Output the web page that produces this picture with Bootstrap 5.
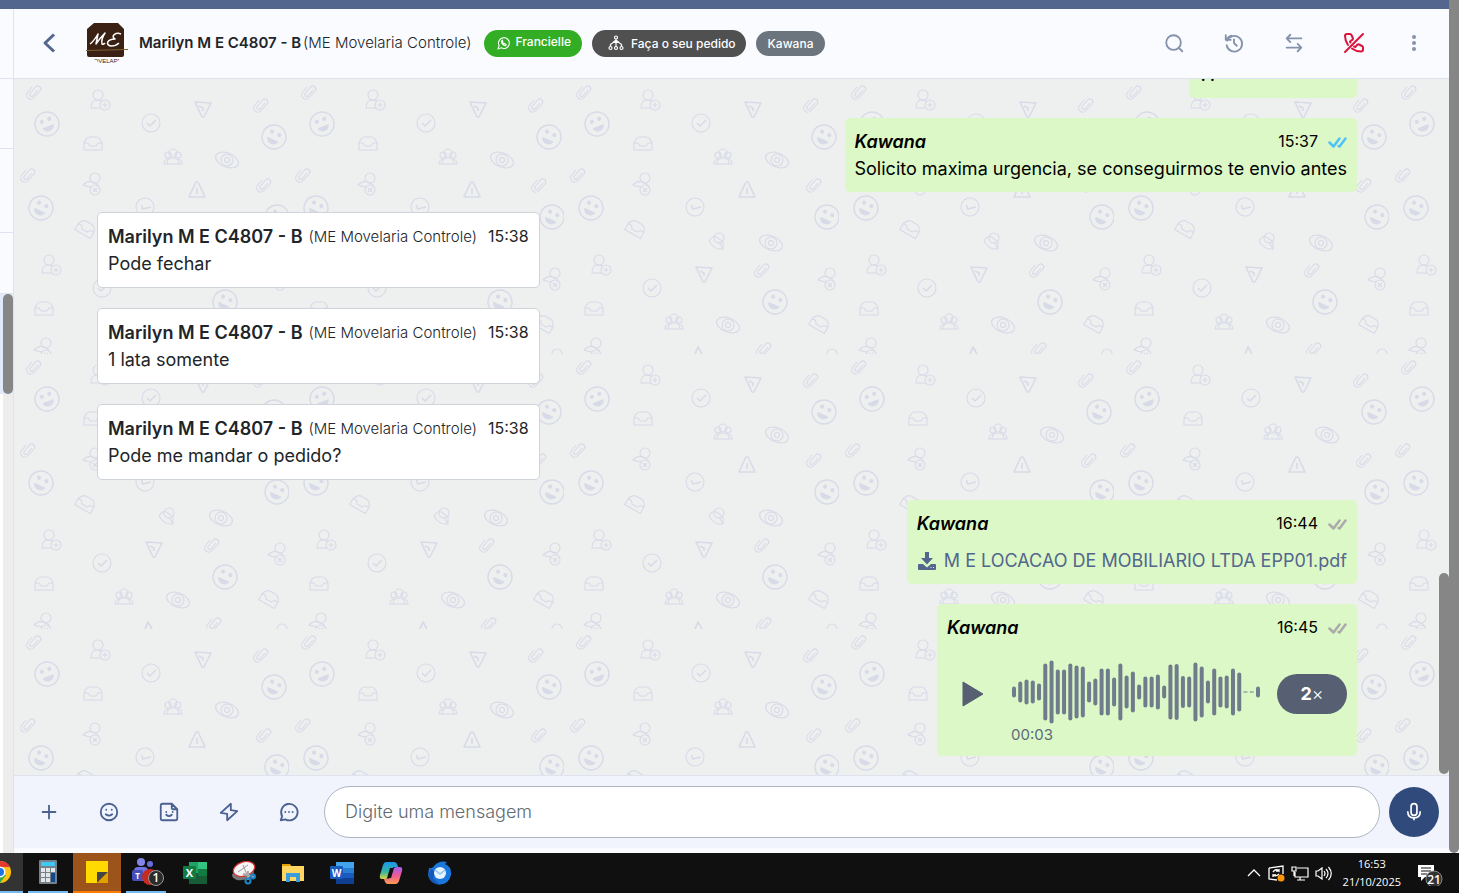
<!DOCTYPE html>
<html lang="pt-BR">
<head>
<meta charset="utf-8">
<meta name="viewport" content="width=device-width, initial-scale=1">
<title>Atendimento</title>
<link href="https://cdn.jsdelivr.net/npm/bootstrap@5.3.0/dist/css/bootstrap.min.css" rel="stylesheet">
<style>
body{font-family:Inter,"Liberation Sans",sans-serif;background:#fafbff;color:#212529}
svg{display:block;flex:none}
.ic{fill:none;stroke:currentColor;stroke-width:2;stroke-linecap:round;stroke-linejoin:round}
.iconbtn{width:60px;height:60px;padding:0;border:0;display:flex;align-items:center;justify-content:center;color:#8592ab;flex:none}
.topstrip{height:9px;background:#53668d}
.pagebar{width:10px;background:#868686;border-radius:0 0 5px 5px}
.sliver{width:14px;border-right:1px solid #dfe3ef;background:#ededed}
.sliver .conv{border-bottom:1px solid #dfe3ef;background:#fafbff}
.sliver .sel{height:100px;background:#dfebf8;padding-left:3px}
.sliver .thumb{height:100px;background:#868686;border-radius:5px}
.sliver .rest{width:3px;background:#fff}
.chathead{height:70px;border-bottom:1px solid #dfe3ef;background:#fafbff;padding-left:14px;padding-right:5px}
.headname{font-size:15px;line-height:24px;gap:2px;margin-left:11px}
.org{font-size:15px;font-weight:300}
.semi{font-weight:600}
.pills{margin-left:13px;gap:10px}
.pill{border-radius:14px;color:#fff;font-size:12px;font-weight:500;line-height:17px;border:0}
.pill-green{background:#33ae24;height:27px;padding:0 11px 0 13px;gap:5px}
.pill-green span{padding-bottom:4px}
.pill-dark{background:#505050;height:27px;padding:0 10px 0 16px;gap:7px}
.pill-gray{background:#6c757d;height:25px;padding:0 12px}
.feed{background-color:#eeefef;gap:20px;padding:0 92px 19px 83px;
background-image:url("data:image/svg+xml,%3Csvg xmlns='http://www.w3.org/2000/svg' xmlns:xlink='http://www.w3.org/1999/xlink' width='275' height='275' viewBox='0 0 275 275'%3E%3Cdefs%3E%3Cpath id='c' d='M5 -2L0 4a2 2 0 0 1-3-2.500L2.500-5a3 3 0 0 1 4.500 4L1 5.500a4 4 0 0 1-6.500-5L-1-5'/%3E%3Cg id='s'%3E%3Ccircle r='12' stroke-width='1.400'/%3E%3Ccircle cx='-4' cy='-4' r='1.500' fill='%23d8dae8'/%3E%3Ccircle cx='4' cy='-4' r='1.500' fill='%23d8dae8'/%3E%3Cpath d='M-5.500 3H5.500Q4 7 0 7T-5.500 3' fill='%23d8dae8'/%3E%3C/g%3E%3Cg id='k'%3E%3Ccircle r='9'/%3E%3Cpath d='M-4 0l3 3 6-6' stroke-width='1.500'/%3E%3C/g%3E%3Cg id='u'%3E%3Ccircle cx='-2' cy='-5' r='5'/%3E%3Cpath d='M1 8H-9Q-9 0-3 0Q1 0 2 2'/%3E%3Ccircle cx='5' cy='5' r='5'/%3E%3Cpath d='M2.500 5h5M5 2.500v5'/%3E%3C/g%3E%3Cg id='x'%3E%3Ccircle cx='3' cy='-6' r='5'/%3E%3Cpath d='M3-1Q-3-5-9 1Q-3 3 0 3M3-1Q8 2 6 3'/%3E%3Ccircle cx='3' cy='6' r='5'/%3E%3Cpath d='M1 4l4 4M5 4l-4 4'/%3E%3C/g%3E%3Cpath id='p' d='M-8-7L8-6L1 8H-1ZM-4-3L0-1V2' stroke-width='1.600'/%3E%3Cpath id='v' d='M-8 7Q-4-2-1-8H1Q4-2 8 7ZM0-2V4' stroke-width='1.600'/%3E%3Cpath id='i' d='M-9 7V0Q-7-6-3-6H3Q7-6 9 0V7ZM-9 0H-5L-3 3H3L5 0H9'/%3E%3Cg id='g'%3E%3Ccircle cy='-4' r='4'/%3E%3Ccircle cx='-5' cy='-2' r='3'/%3E%3Ccircle cx='5' cy='-2' r='3'/%3E%3Cpath d='M-6 7Q-6 1 0 1T6 7ZM-6 7H-9Q-9 3-5 2M6 7H9Q9 3 5 2'/%3E%3C/g%3E%3Cg id='e'%3E%3Cellipse rx='12' ry='7'/%3E%3Ccircle r='6'/%3E%3Ccircle r='2.500'/%3E%3C/g%3E%3C/defs%3E%3Cg fill='none' stroke='%23d8dae8' stroke-width='1.100' stroke-linejoin='round'%3E%3Cuse xlink:href='%23c' x='19' y='13'/%3E%3Cuse xlink:href='%23u' x='86' y='21'/%3E%3Cuse xlink:href='%23p' x='189' y='30'/%3E%3Cuse xlink:href='%23c' x='246' y='26'/%3E%3Cuse xlink:href='%23s' transform='translate(33 45) rotate(-22)'/%3E%3Cuse xlink:href='%23k' x='137' y='44'/%3E%3Cuse xlink:href='%23s' transform='translate(260 58) rotate(25)'/%3E%3Cuse xlink:href='%23i' x='79' y='64'/%3E%3Cuse xlink:href='%23g' x='159' y='78'/%3E%3Cuse xlink:href='%23e' transform='translate(213 81) rotate(22)'/%3E%3Cuse xlink:href='%23c' x='13' y='96'/%3E%3Cuse xlink:href='%23x' x='78' y='105'/%3E%3Cuse xlink:href='%23v' x='183' y='111'/%3E%3Cuse xlink:href='%23c' x='249' y='106'/%3E%3Cuse xlink:href='%23s' transform='translate(27 129) rotate(25)'/%3E%3Cuse xlink:href='%23k' transform='translate(131 128) rotate(30)'/%3E%3Cuse xlink:href='%23s' transform='translate(263 138) rotate(25)'/%3E%3Cuse xlink:href='%23i' transform='translate(72 149) rotate(30)'/%3E%3Cpath d='M145 162Q149 155 154 159L159 163V170H155Q149 169 145 162M155 163l4 7'/%3E%3Ccircle cx='155' cy='159' r='5'/%3E%3Cuse xlink:href='%23e' transform='translate(207 164) rotate(22)'/%3E%3Cuse xlink:href='%23u' x='37' y='186'/%3E%3Cuse xlink:href='%23p' x='140' y='195'/%3E%3Cuse xlink:href='%23c' x='197' y='191'/%3E%3Cuse xlink:href='%23x' x='263' y='200'/%3E%3Cuse xlink:href='%23k' x='88' y='209'/%3E%3Cuse xlink:href='%23s' transform='translate(211 223) rotate(25)'/%3E%3Cuse xlink:href='%23i' x='30' y='229'/%3E%3Cuse xlink:href='%23i' transform='translate(256 244) rotate(30)'/%3E%3Cuse xlink:href='%23g' x='110' y='243'/%3E%3Cuse xlink:href='%23e' transform='translate(164 246) rotate(22)'/%3E%3Ccircle cx='268' cy='275' r='5'/%3E%3Cuse xlink:href='%23x' x='29' y='270'/%3E%3Cpath d='M131 275l3-7 4 7' stroke-width='1.700'/%3E%3Cuse xlink:href='%23c' x='199' y='270'/%3E%3C/g%3E%3C/svg%3E")}
.bubble{border-radius:5px;padding:10px;font-size:18px;line-height:27px;flex:none}
.sent{background:#dcf8c6;color:#000;align-self:flex-end}
.got{background:#fff;border:1px solid #ced4da;align-self:flex-start}
.bubble time{font-size:16px}
.got .org{margin-left:6px;margin-right:11px}
.sent .who{font-style:italic;font-weight:600}
.ticks{margin-left:10px;stroke-width:2.500;fill:none;stroke-linecap:round;stroke-linejoin:round}
.short{width:168px}
.filelink{color:#53668d;margin-top:10px;gap:7px}
.audio{width:420px}
.player{height:105px}
.playbtn{width:64px;border:0;padding:0 0 0 15px;background:none}
.wavewrap{width:250px;padding-top:19px}
.wavewrap .clock{font-size:15px;line-height:22px;color:#5d6b78}
.speed{width:70px;height:40px;border:0;border-radius:20px;background:#575f72;color:#fff;font-size:18px;line-height:27px;margin-left:16px;padding:0}
.speed b{font-weight:700}
.speed span{font-weight:300}
.innerbar{right:0;bottom:1px;width:10px;height:201px;background:#868686;border-radius:5px}
.composer{height:73px;background:#f1f4fd;border-top:1px solid #dfe3ef;padding:0 10px 0 5px}
.composer .iconbtn{color:#4b6190}
.msginput{height:52px;border:1px solid #adb5c4;border-radius:26px;padding:0 20px 1px;font-size:18px;font-weight:300;margin-left:5px;margin-right:9px;background:#fff}
.msginput::placeholder{color:#5f6972}
.mic{width:50px;height:50px;border:0;background:#304b7b;color:#fff}
.underfoot{height:5px}
.taskbar{height:40px;background:#101010;font-family:"Open Sans",sans-serif;color:#fff}
.app{width:40px;height:40px;border:0;padding:0;background:none;display:flex;align-items:center;justify-content:center;flex:none}
.apps{gap:9px}
.app.on{border-bottom:2px solid #76b9ed}
.app.chrome{width:23px;background:#333;justify-content:flex-start;overflow:hidden;margin-right:-4px}
.app.note{width:48px;background:#9d541b;border-bottom:2px solid #ff7b00;margin:0 -4px}
.clockbox{font-size:11px;line-height:18px;text-align:center}
.tray{gap:6px}
</style>
</head>
<body class="vh-100 d-flex flex-column overflow-hidden">
<div class="d-flex flex-grow-1" style="min-height:0">
  <div class="d-flex flex-column flex-grow-1" style="min-width:0">
    <div class="topstrip"></div>
    <div class="d-flex flex-grow-1" style="min-height:0">
      <aside class="sliver d-flex flex-column flex-shrink-0">
        <div class="conv" style="height:70px"></div>
        <div class="conv" style="height:70px"></div>
        <div class="conv" style="height:84px"></div>
        <div class="conv" style="height:61px"></div>
        <div class="sel"><div class="thumb"></div></div>
        <div class="rest flex-grow-1"></div>
      </aside>
      <main class="d-flex flex-column flex-grow-1" style="min-width:0">
        <header class="chathead d-flex align-items-center flex-shrink-0">
          <button class="iconbtn bg-transparent" style="width:42px" aria-label="Voltar"><svg class="ic" width="24" height="24" viewBox="0 0 24 24" style="color:#53668d;stroke-width:3;stroke-linecap:butt"><path d="M17 3.500l-9 8.500 9 8.500"/></svg></button>
          <svg class="ms-3" width="42" height="42" viewBox="0 0 42 42" role="img" aria-label="ME Movelaria"><clipPath id="av"><circle cx="21" cy="21" r="21"/></clipPath><circle cx="21" cy="21" r="21" fill="#fff"/><path d="M8 1h24l6 6v26q0 2-2 2H3q-2 0-2-2V7z" fill="#3b2014"/><path d="M4 22q4-3 8-10l-2 10q4-6 9-11-4 6-3 11 1 1 3-1M35 12c-5-2-11 2-6 5-8 0-10 6-4 7 3 0 6-1 8-3" fill="none" stroke="#fff" stroke-width="1.500" stroke-linejoin="round"/><path d="M0 28.500l42-1" stroke="#80602f" stroke-width="1"/><g clip-path="url(#av)"><text x="20" y="41" text-anchor="middle" font-size="6" font-family="Liberation Sans" fill="#3b2014">MOVELARIA</text></g></svg>
          <div class="headname d-flex text-nowrap"><span class="semi">Marilyn M E C4807 - B</span><span class="org">(ME Movelaria Controle)</span></div>
          <div class="pills d-flex align-items-center text-nowrap">
            <span class="pill pill-green d-flex align-items-center"><svg width="13" height="13" viewBox="0 0 24 24" fill="none" stroke="#fff" stroke-width="2"><path d="M2 22l2-6a10 10 0 1 1 4 4zM8 8c0 4 4 8 8 8l1-2-3-2-1 1q-2-1-3-3l1-1-1-3z"/></svg><span>Francielle</span></span>
            <span class="pill pill-dark d-flex align-items-center"><svg width="16" height="16" viewBox="0 0 16 16" fill="none" stroke="#fff" stroke-width="1.200"><circle cx="8" cy="2.500" r="1.500"/><circle cx="2.500" cy="13" r="1.500"/><circle cx="8" cy="13" r="1.500"/><circle cx="13.500" cy="13" r="1.500"/><path d="M8 4v7.500M2.500 11.500V9.500L5 7.500h6l2.500 2v2M5 7.500L8 5l3 2.500"/></svg><span>Faça o seu pedido</span></span>
            <span class="pill pill-gray d-flex align-items-center">Kawana</span>
          </div>
          <div class="d-flex ms-auto">
            <button class="iconbtn bg-transparent" aria-label="Buscar"><svg class="ic" width="22" height="22" viewBox="0 0 24 24"><circle cx="11.500" cy="11.500" r="8"/><path d="M21 21l-3.500-3.500"/></svg></button>
            <button class="iconbtn bg-transparent" aria-label="Histórico"><svg class="ic" width="22" height="22" viewBox="0 0 24 24"><path d="M12 8v4l3 3M4.500 9.500A8.500 8.500 0 1 1 4 14.500M3 3.500v5h5.500M4 8q2-3 5-4"/></svg></button>
            <button class="iconbtn bg-transparent" aria-label="Transferir"><svg class="ic" width="22" height="22" viewBox="0 0 24 24"><path d="M20 7H4M8 3L4 7l4 4M4 17h16M16 13l4 4-4 4"/></svg></button>
            <button class="iconbtn bg-transparent" aria-label="Encerrar" style="color:#dc143c"><svg class="ic" width="24" height="24" viewBox="0 0 24 24"><path d="M21 3L3 21M6 14Q3 9.500 3 5q0-2 2-2h3q1 0 1.500 1L11 7.500q0 1-1 1.500L8 10.500l.5 1M12 15.500l1.500.5 1.500-2q1-1 2-.5l3 1.500q1 .5 1 1.500v2q0 2-2 2-5 0-9-3"/></svg></button>
            <button class="iconbtn bg-transparent" aria-label="Mais opções"><svg width="22" height="22" viewBox="0 0 22 22" fill="currentColor"><circle cx="11" cy="5" r="2"/><circle cx="11" cy="11" r="2"/><circle cx="11" cy="17" r="2"/></svg></button>
          </div>
        </header>
        <section class="position-relative flex-grow-1 d-flex flex-column overflow-hidden" style="min-height:0">
          <div class="feed flex-grow-1 d-flex flex-column justify-content-end overflow-hidden" style="min-height:0">
            <article class="bubble sent short">??</article>
            <article class="bubble sent">
              <div class="d-flex align-items-center"><span class="who">Kawana</span><time class="ms-auto">15:37</time><svg class="ticks" width="19" height="12" viewBox="0 0 19 12" stroke="#4fc3f7"><path d="M1.500 6.500l4 4 6-8M10.500 10l1 .5 6-8"/></svg></div>
              <div>Solicito maxima urgencia, se conseguirmos te envio antes</div>
            </article>
            <article class="bubble got"><div class="d-flex align-items-center"><span class="semi">Marilyn M E C4807 - B</span><span class="org">(ME Movelaria Controle)</span><time>15:38</time></div><div>Pode fechar</div></article>
            <article class="bubble got"><div class="d-flex align-items-center"><span class="semi">Marilyn M E C4807 - B</span><span class="org">(ME Movelaria Controle)</span><time>15:38</time></div><div>1 lata somente</div></article>
            <article class="bubble got"><div class="d-flex align-items-center"><span class="semi">Marilyn M E C4807 - B</span><span class="org">(ME Movelaria Controle)</span><time>15:38</time></div><div>Pode me mandar o pedido?</div></article>
            <article class="bubble sent">
              <div class="d-flex align-items-center"><span class="who">Kawana</span><time class="ms-auto">16:44</time><svg class="ticks" width="19" height="12" viewBox="0 0 19 12" stroke="#aaa"><path d="M1.500 6.500l4 4 6-8M10.500 10l1 .5 6-8"/></svg></div>
              <a href="#" class="filelink d-flex align-items-center text-decoration-none"><svg width="20" height="20" viewBox="0 0 20 20" fill="currentColor"><path d="M8 1h4v6h4l-6 6.500L4 7h4zM2 13h4l4 3.500 4-3.500h4q1 0 1 1v4q0 1-1 1H2q-1 0-1-1v-4q0-1 1-1z"/><path d="M13.500 16.500h1M16 16.500h1" stroke="#dcf8c6"/></svg><span>M E LOCACAO DE MOBILIARIO LTDA EPP01.pdf</span></a>
            </article>
            <article class="bubble sent audio">
              <div class="d-flex align-items-center"><span class="who">Kawana</span><time class="ms-auto">16:45</time><svg class="ticks" width="19" height="12" viewBox="0 0 19 12" stroke="#aaa"><path d="M1.500 6.500l4 4 6-8M10.500 10l1 .5 6-8"/></svg></div>
              <div class="player d-flex">
                <button class="playbtn" aria-label="Reproduzir"><svg width="22" height="26" viewBox="0 0 22 26"><path d="M1 1l20 12L1 25z" fill="#575f72" stroke="#575f72" stroke-linejoin="round"/></svg></button>
                <div class="wavewrap"><svg id="wave" width="250" height="64" viewBox="0 0 250 64" stroke="#707c8b" stroke-width="4" stroke-linecap="round"></svg><div class="clock">00:03</div></div>
                <button class="speed align-self-center"><b>2</b><span>×</span></button>
              </div>
            </article>
          </div>
          <div class="innerbar position-absolute"></div>
        </section>
        <footer class="composer d-flex align-items-center flex-shrink-0">
          <button class="iconbtn bg-transparent" aria-label="Anexar"><svg class="ic" width="22" height="22" viewBox="0 0 24 24"><path d="M12 5v14M5 12h14"/></svg></button>
          <button class="iconbtn bg-transparent" aria-label="Emojis"><svg class="ic" width="22" height="22" viewBox="0 0 24 24"><circle cx="12" cy="12" r="9"/><path d="M9 9.500h0M15 9.500h0M8.500 14.500q3.500 3 7 0"/></svg></button>
          <button class="iconbtn bg-transparent" aria-label="Figurinhas"><svg class="ic" width="22" height="22" viewBox="0 0 24 24"><path d="M5 3h10l6 6v10q0 2-2 2H5q-2 0-2-2V5q0-2 2-2M15 3v5q0 1 1 1h5M9 12h0M16 12h0M9 15q3 3 6 0"/></svg></button>
          <button class="iconbtn bg-transparent" aria-label="Respostas rápidas"><svg class="ic" width="22" height="22" viewBox="0 0 24 24"><path d="M14 3v7l7 1-11 10v-7l-7-1z"/></svg></button>
          <button class="iconbtn bg-transparent" aria-label="Comentário"><svg class="ic" width="22" height="22" viewBox="0 0 24 24"><path d="M3 21l1.500-4.500A9 9 0 1 1 8 20zM8 12h0M12 12h0M16 12h0"/></svg></button>
          <input class="msginput flex-grow-1" type="text" placeholder="Digite uma mensagem" aria-label="Digite uma mensagem">
          <button class="mic rounded-circle d-flex align-items-center justify-content-center flex-shrink-0 p-0" aria-label="Gravar áudio"><svg class="ic" width="20" height="20" viewBox="0 0 24 24"><rect x="8.500" y="2" width="7" height="14" rx="3.500"/><path d="M4.500 11q0 8 7.500 8t7.500-8M12 19v3" stroke-linecap="butt"/></svg></button>
        </footer>
        <div class="underfoot flex-shrink-0"></div>
      </main>
    </div>
  </div>
  <div class="pagebar flex-shrink-0"></div>
</div>
<nav class="taskbar d-flex align-items-center flex-shrink-0">
  <div class="apps d-flex">
    <button class="app on chrome" aria-label="Chrome"><svg width="12" height="24" viewBox="12 0 12 24"><circle cx="12" cy="12" r="11" fill="#fbc116"/><path d="M0 1h12a11 11 0 0 1 10 6H0z" fill="#e33b2e"/><path d="M12 23l6-8-9 0v8z" fill="#2da94f"/><circle cx="12" cy="12" r="5.500" fill="#fff"/><circle cx="12" cy="12" r="4" fill="#1a73e8"/></svg></button>
    <button class="app on" aria-label="Calculadora"><svg width="18" height="24" viewBox="0 0 18 24"><rect width="18" height="24" rx="1" fill="#75818b"/><rect x="2" y="2" width="14" height="4" fill="#40c8f4"/><g fill="#e3e6e9"><path d="M2 8h4v4H2zM7 8h4v4H7zM12 8h4v4h-4zM2 13h4v4H2zM7 13h4v4H7zM2 18h4v4H2zM7 18h4v4H7z"/></g><path d="M12 13h4v9h-4z" fill="#114a8c"/></svg></button>
    <button class="app note" aria-label="Notas"><svg width="22" height="22" viewBox="0 0 22 22"><path d="M0 0h22v11L11 22H0z" fill="#ffd900"/><path d="M11 22V11h11z" fill="#444"/><path d="M22 11v11H11z" fill="#dfa000"/></svg></button>
    <button class="app on" aria-label="Teams"><svg width="36" height="28" viewBox="0 0 36 28"><circle cx="13" cy="4" r="4" fill="#8187e8"/><circle cx="22" cy="6" r="3" fill="#666ddd"/><rect x="6" y="9" width="14" height="14" rx="4" fill="#7075e5"/><rect x="4" y="12" width="11" height="11" rx="2" fill="#464eb8"/><text x="9.500" y="20.500" font-size="8" font-weight="700" text-anchor="middle" fill="#fff">T</text><circle cx="22" cy="19" r="8" fill="#c52b20"/><circle cx="28" cy="20" r="7.500" fill="#2b2b2b" stroke="#999"/><text x="28" y="24" font-size="12" font-weight="600" text-anchor="middle" fill="#fff">1</text></svg></button>
    <button class="app" aria-label="Excel"><svg width="24" height="22" viewBox="0 0 24 22"><path d="M6 0h9v11H6z" fill="#21a366"/><path d="M15 0h9v7h-9z" fill="#33c481"/><path d="M15 7h9v7h-9z" fill="#107c41"/><path d="M6 11h9v11H6zM15 14h9v8h-9z" fill="#185c37"/><rect y="4" width="13" height="13" rx="1" fill="#107c41"/><text x="6.500" y="14.500" font-size="11" font-weight="700" text-anchor="middle" fill="#fff">X</text></svg></button>
    <button class="app" aria-label="Ferramenta de Captura"><svg width="26" height="24" viewBox="0 0 26 24"><ellipse cx="12" cy="13" rx="11" ry="6" transform="rotate(-12 12 13)" fill="#777"/><ellipse cx="13" cy="8" rx="11" ry="7" transform="rotate(-18 13 8)" fill="#f5f5f5" stroke="#d33" stroke-width="1.200"/><path d="M7 11l10-7M12 4l4 10" stroke="#999"/><path d="M12 13l11 3M17 10v9" stroke="#aaa" stroke-width="2"/><g fill="none" stroke="#1c86c7" stroke-width="2"><circle cx="17" cy="20" r="2.500"/><circle cx="22" cy="15.500" r="2"/></g></svg></button>
    <button class="app" aria-label="Explorador de Arquivos"><svg width="22" height="20" viewBox="0 0 22 20"><path d="M0 1h8l2 3H0z" fill="#e8a200"/><path d="M0 3h22v15H0z" fill="#ffd660"/><path d="M4 19v-9h14v9h-4v-5H8v5z" fill="#3b9bdc"/></svg></button>
    <button class="app" aria-label="Word"><svg width="24" height="22" viewBox="0 0 24 22"><path d="M6 0h18v6H6z" fill="#41a5ee"/><path d="M6 6h18v5H6z" fill="#2b7cd3"/><path d="M6 11h18v5H6z" fill="#185abd"/><path d="M6 16h18v6H6z" fill="#103f91"/><rect y="4" width="13" height="13" rx="1" fill="#185abd"/><text x="6.500" y="14.500" font-size="10" font-weight="700" text-anchor="middle" fill="#fff">W</text></svg></button>
    <button class="app" aria-label="Copilot"><svg width="24" height="22" viewBox="0 0 24 22"><defs><linearGradient id="ca" x2="0" y2="1"><stop stop-color="#1995ec"/><stop offset=".6" stop-color="#39b5a0"/><stop offset="1" stop-color="#e5d43a"/></linearGradient><linearGradient id="cb" x2="0" y2="1"><stop stop-color="#a45df0"/><stop offset=".5" stop-color="#ed5a95"/><stop offset="1" stop-color="#ff9b52"/></linearGradient></defs><path d="M7 0h8q3 0 4 5h-3q-3 0-4 4l-2 6q-1 2-4 2H3q-3 0-2-4L4 3q1-3 3-3z" fill="url(#ca)"/><path d="M17 22H9q-3 0-4-5h3q3 0 4-4l2-6q1-2 4-2h3q3 0 2 4l-3 10q-1 3-3 3z" fill="url(#cb)"/><path d="M11 6h4l-3 10H8z" fill="#101010"/></svg></button>
    <button class="app" aria-label="Thunderbird"><svg width="26" height="24" viewBox="0 0 26 24"><path d="M2 7q3 1 5-2 5-6 13-4l-2 2q7 3 6 11-2 9-11 9.500Q3 23 1 14z" fill="#1a77dc"/><path d="M1 14l3-6 4 3-2 6 7 7Q3 23 1 14" fill="#1459b8"/><circle cx="13" cy="12" r="6" fill="#e8f4ff"/><path d="M8 9l5 4 5-4" fill="none" stroke="#8cc3f3" stroke-width="1.500"/></svg></button>
  </div>
  <div class="tray d-flex align-items-center ms-auto">
    <svg width="14" height="18" viewBox="0 0 14 18" fill="none" stroke="#fff" stroke-width="1.300"><path d="M1 12l6-6 6 6"/></svg>
    <svg width="18" height="18" viewBox="0 0 18 18" fill="none" stroke="#fff" stroke-width="1.300"><path d="M2 4l14-2v8M2 4v11l8 1M6 8q3-4 6-1V5M12 10q-3 3-6 1v2M6 11h3M9 7h3"/><circle cx="14" cy="14" r="3.500" fill="#ff950a" stroke="none"/></svg>
    <svg width="18" height="18" viewBox="0 0 18 18" fill="none" stroke="#fff" stroke-width="1.200"><path d="M6 4h11v9H4V8M9 13v3M6 16h8M1 3h4v4H1zM3 7v5"/></svg>
    <svg width="18" height="18" viewBox="0 0 18 18" fill="none" stroke="#fff" stroke-width="1.200"><path d="M1 7v5h2l4 3V4L3 7zM9 7q2 2.500 0 5M11 5q4 4.500 0 9M13.500 3q5.500 6.500 0 13"/></svg>
    <div class="clockbox ms-1">16:53<br>21/10/2025</div>
    <svg class="ms-2 me-3" width="28" height="26" viewBox="0 0 28 26"><path d="M3 5h16v12h-9l-4 4v-4H3z" fill="#fff"/><path d="M6 8h10M6 11h10M6 14h6" stroke="#101010"/><circle cx="19" cy="19" r="8" fill="#333" stroke="#888"/><text x="19" y="23.500" font-size="12" font-weight="600" text-anchor="middle" fill="#fff">21</text></svg>
  </div>
</nav>
<script src="https://cdn.jsdelivr.net/npm/bootstrap@5.3.0/dist/js/bootstrap.bundle.min.js"></script>
<script>
// Peak height of each bar of the voice message; 1 marks silence.
const peaks=[11,21,25,23,17,57,63,45,45,57,53,51,21,27,47,47,29,57,33,41,15,31,31,35,13,55,56,32,31,59,51,23,47,31,33,47,39,1,1,11];
const step=244/39;
document.getElementById('wave').innerHTML=peaks.map((h,i)=>{
  const x=3+i*step;
  return h===1?`<path d="M${x-2} 32h4" stroke-width="1" stroke-linecap="butt"/>`:`<path d="M${x} ${32-h/2+2}V${32+h/2-2}"/>`;
}).join('');
</script>
</body>
</html>
